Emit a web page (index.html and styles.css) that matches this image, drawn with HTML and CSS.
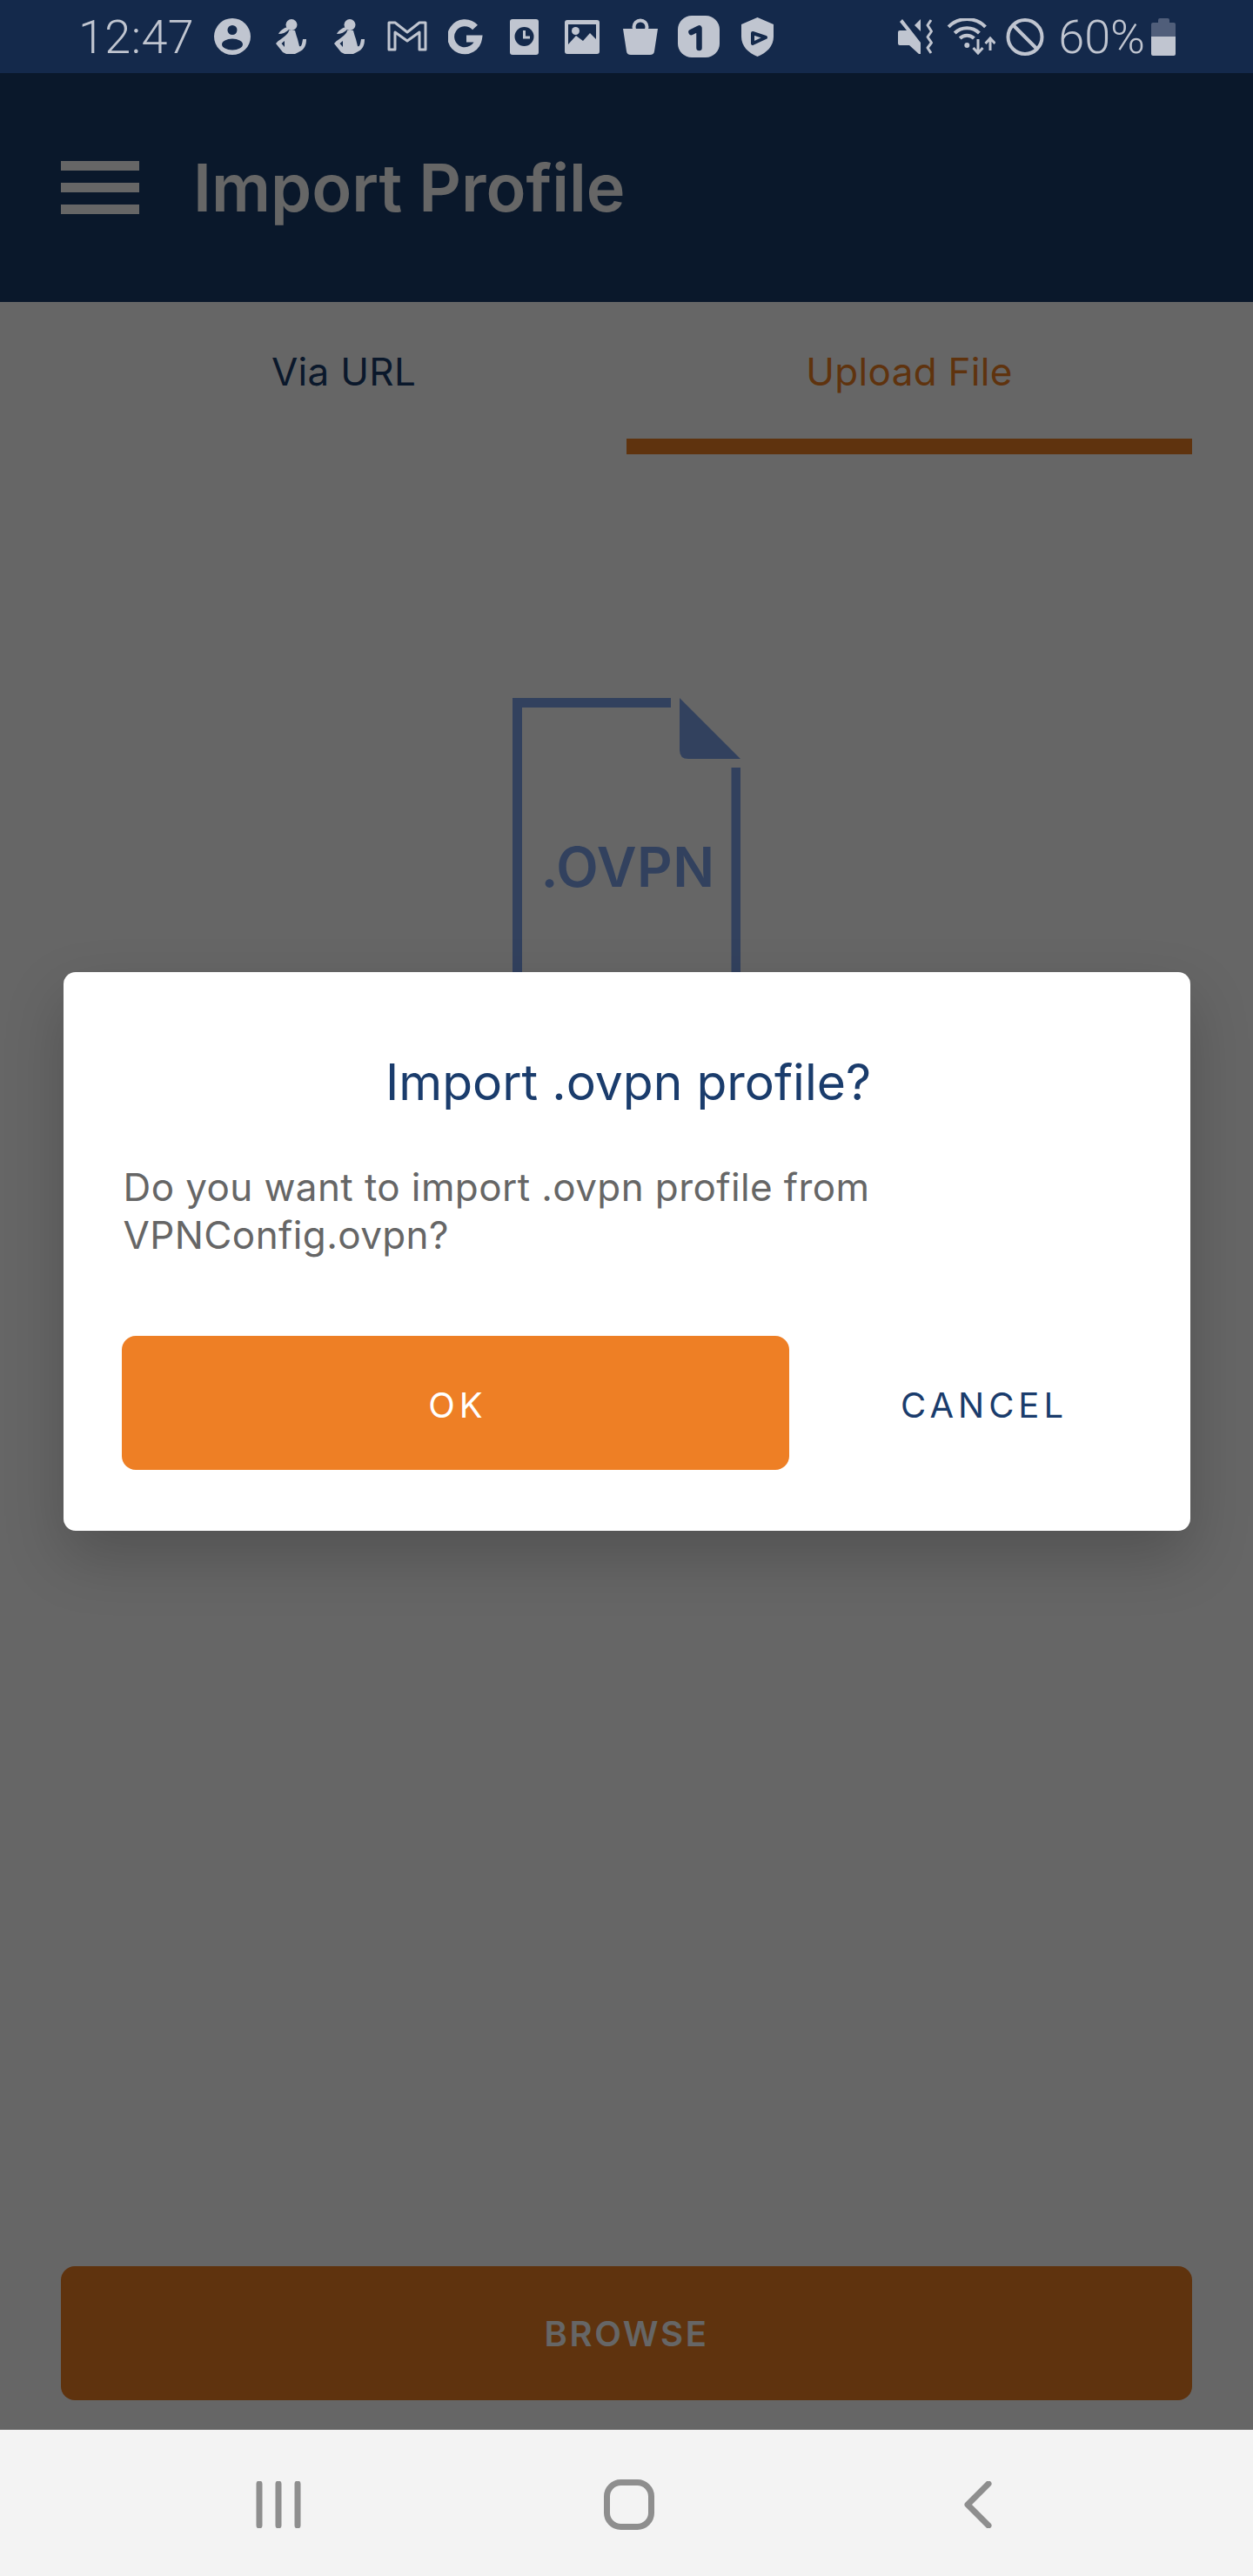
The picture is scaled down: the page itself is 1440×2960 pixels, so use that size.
FILE: index.html
```html
<!DOCTYPE html>
<html lang="en">

<head>
  <meta charset="UTF-8">
  <meta name="viewport" content="width=device-width, initial-scale=1.0">
  <title>Import Profile</title>
  <link rel="stylesheet" href="styles.css">
</head>

<body>
  <div class="screen">
    <!-- Android status bar -->
    <div class="status-bar">
      <span class="status-time">12:47</span>
      <div class="notif-icons">
        <svg width="42" height="42" viewBox="0 0 42 42">
          <circle class="ic" cx="21" cy="21" r="21" />
          <circle class="ic-bg" cx="21" cy="13.5" r="5.5" />
          <ellipse class="ic-bg" cx="21" cy="30" rx="12" ry="6.5" />
        </svg>
        <svg width="35" height="40" viewBox="0 0 35 40">
          <circle class="ic" cx="18" cy="6.5" r="6.5" />
          <path class="ic" d="M14 9 C9 10 5 13 3 17 C8 17 12 15 15 12 Z" />
          <path class="ic" d="M15 13 H22 C23 17 24 20 25 23 L27 31 C29 32 30 30 31 23 H35 C35 30 33 35 26 38 L22 40 H12 L8 38 L0 28 C3 24 8 22 11 19 C13 17 15 15 15 13 Z" />
          <path class="ic-bg" d="M10 25 L6.5 28 L10 32 Z" />
        </svg>
        <svg width="35" height="40" viewBox="0 0 35 40">
          <circle class="ic" cx="18" cy="6.5" r="6.5" />
          <path class="ic" d="M14 9 C9 10 5 13 3 17 C8 17 12 15 15 12 Z" />
          <path class="ic" d="M15 13 H22 C23 17 24 20 25 23 L27 31 C29 32 30 30 31 23 H35 C35 30 33 35 26 38 L22 40 H12 L8 38 L0 28 C3 24 8 22 11 19 C13 17 15 15 15 13 Z" />
          <path class="ic-bg" d="M10 25 L6.5 28 L10 32 Z" />
        </svg>
        <svg width="46" height="36" viewBox="0 0 46 36">
          <path class="ic-line" stroke-width="3" stroke-linejoin="round" d="M2 2 H9 L23 13 L37 2 H44 V33 H37 V13 L23 23 L9 13 V33 H2 Z" />
        </svg>
        <svg width="40" height="41" viewBox="0 0 40 41">
          <path class="ic-line" stroke-width="8" d="M31 9.5 A16 16 0 1 0 35 22.5 H21" />
        </svg>
        <svg width="33" height="41" viewBox="0 0 33 41">
          <rect class="ic" width="33" height="41" rx="3" />
          <circle class="ic-bg" cx="16.5" cy="20" r="11" />
          <path class="ic-line" stroke-width="3" d="M16.5 13 V21 H23" />
        </svg>
        <svg width="40" height="39" viewBox="0 0 40 39">
          <rect class="ic" width="40" height="39" rx="3" />
          <path class="ic-bg" d="M4 5 H36 V22 L29 15 L21 24 L13 18 L4 28 Z" />
          <circle class="ic" cx="12.5" cy="12.5" r="4.5" />
        </svg>
        <svg width="40" height="42" viewBox="0 0 40 42">
          <circle class="ic-line" stroke-width="4" cx="20" cy="10" r="7.5" />
          <path class="ic" d="M0 12 H40 L36 38 Q35.5 42 31 42 H9 Q4.5 42 4 38 Z" />
        </svg>
        <svg width="48" height="48" viewBox="0 0 48 48">
          <rect class="ic" width="48" height="48" rx="16" />
          <path class="ic-line ic-line-dark" stroke-width="6.5" stroke-linecap="round" stroke-linejoin="round" d="M15.5 19 L24.5 14.5 V37" />
        </svg>
        <svg width="37" height="45" viewBox="0 0 37 45">
          <path class="ic" d="M18.5 0 L37 8 V22 C37 33 29 41 18.5 45 C8 41 0 33 0 22 V8 Z" />
          <path class="ic-play" stroke-width="4" stroke-linejoin="round" d="M13 18 L28 23 L13 30 Z" />
        </svg>
      </div>
      <div class="system-icons">
        <svg class="icon-mute" width="41" height="40" viewBox="0 0 41 40">
          <path class="ic" d="M2 3 L5 0 L26 27 V40 H24 L13 30 H2 Q0 30 0 28 V15 Q0 13 2 13 H10 Z" />
          <path class="ic" d="M26 0 V14 L19 7 Z" />
          <path class="ic-line" stroke-width="3" stroke-linejoin="round" d="M38 1 L34 7 L38.5 14 L34 20.5 L38.5 27 L34 33 L38 39" />
        </svg>
        <svg width="56" height="42" viewBox="0 0 56 42">
          <path class="ic-line" stroke-width="4" d="M2.1 9.8 A30 30 0 0 1 44.5 9.8" />
          <path class="ic-line" stroke-width="4" d="M9.2 17 A20 20 0 0 1 37.4 17" />
          <path class="ic-line" stroke-width="4" d="M15.2 23 A11.5 11.5 0 0 1 31.4 23" />
          <circle class="ic" cx="23.3" cy="31" r="3" />
          <path class="ic-line" stroke-width="3" d="M36 24 V40 M30.5 34 L36 40 L41.5 34" />
          <path class="ic-line" stroke-width="3" d="M50 37 V24 M44.5 29 L50 23 L55.5 29" />
        </svg>
        <svg width="44" height="43" viewBox="0 0 44 43">
          <circle class="ic-line" stroke-width="4" cx="22" cy="21.5" r="19.5" />
          <path class="ic-line" stroke-width="4" d="M8 7.5 L36 35.5" />
        </svg>
        <span class="status-battery-text">60%</span>
        <svg width="28" height="43" viewBox="0 0 28 43">
          <path class="ic-dim" d="M8 2 Q8 0 10 0 H19 Q21 0 21 2 V5 H26 Q28 5 28 7 V21 H0 V7 Q0 5 2 5 H8 Z" />
          <path class="ic" d="M0 21 H28 V41 Q28 43 26 43 H2 Q0 43 0 41 Z" />
        </svg>
      </div>
    </div>

    <div class="app">
      <header class="app-header">
        <div class="menu-icon">
          <span></span>
          <span></span>
          <span></span>
        </div>
        <h1>Import Profile</h1>
      </header>

      <nav class="tabs">
        <div class="tab">Via URL</div>
        <div class="tab tab-active">Upload File</div>
      </nav>

      <main class="upload-area">
        <svg class="file-icon" width="262" height="330" viewBox="0 0 262 330">
          <path class="file-line" d="M182 5.5 H5.5 V330 M257 80 V330" />
          <path class="file-fold" d="M192 0 L262 70 H202 Q192 70 192 60 Z" />
          <text class="file-ext" x="132.5" y="217" text-anchor="middle">.OVPN</text>
        </svg>
      </main>

      <div class="browse-wrap">
        <button class="browse-button">BROWSE</button>
      </div>

      <!-- Dimmed overlay with the dialog -->
      <div class="scrim">
        <div class="dialog">
          <h2>Import .ovpn profile?</h2>
          <p>Do you want to import .ovpn profile from<br>VPNConfig.ovpn?</p>
          <div class="dialog-actions">
            <button class="ok-button">OK</button>
            <button class="cancel-button">CANCEL</button>
          </div>
        </div>
      </div>
    </div>

    <!-- Android navigation bar -->
    <div class="nav-bar">
      <svg class="nav-recents" width="52" height="54" viewBox="0 0 52 54">
        <path d="M4 3 V51 M26 3 V51 M48 3 V51" />
      </svg>
      <svg class="nav-home" width="58" height="58" viewBox="0 0 58 58">
        <rect x="3.5" y="3.5" width="51" height="51" rx="16" />
      </svg>
      <svg class="nav-back" width="32" height="54" viewBox="0 0 32 54">
        <path d="M28 3 L4 27 L28 51" />
      </svg>
    </div>
  </div>
</body>

</html>
```

FILE: styles.css
```css
:root {
  --navy: #1a3c6c;
  --orange: #ee7f25;
  --file-blue: #7da4ec;
  --status-bg: #14294b;
  --status-fg: #c0c5d0;
  --text-grey: #666666;
}

* {
  margin: 0;
  padding: 0;
  box-sizing: border-box;
}

body {
  font-family: 'Inter', sans-serif;
  background: #fff;
}

.screen {
  width: 1440px;
  height: 2960px;
  display: flex;
  flex-direction: column;
  overflow: hidden;
}

/* Status bar */
.status-bar {
  height: 84px;
  flex-shrink: 0;
  display: flex;
  align-items: center;
  padding: 0 89px 0 90px;
  background: var(--status-bg);
  color: var(--status-fg);
  font-family: 'Roboto', sans-serif;
  font-weight: 300;
  font-size: 54px;
}

.status-time {
  width: 143.5px;
  letter-spacing: 0.4px;
}

.notif-icons {
  display: grid;
  grid-template-columns: repeat(10, 67px);
  align-items: center;
  justify-items: center;
}

.system-icons {
  margin-left: auto;
  display: flex;
  align-items: center;
  gap: 12px;
}

.icon-mute {
  margin-right: 3px;
}

.status-battery-text {
  margin: 0 -5px 0 4px;
}

.ic {
  fill: var(--status-fg);
}

.ic-bg {
  fill: var(--status-bg);
}

.ic-dim {
  fill: #505e7a;
}

.ic-play {
  fill: var(--status-fg);
  stroke: var(--status-bg);
}

.ic-line {
  fill: none;
  stroke: var(--status-fg);
}

.ic-line-dark {
  stroke: var(--status-bg);
}

/* App content */
.app {
  flex: 1;
  position: relative;
  display: flex;
  flex-direction: column;
}

.app-header {
  height: 263px;
  flex-shrink: 0;
  display: flex;
  align-items: center;
  padding-left: 70px;
  background: var(--navy);
  color: #fff;
}

.app-header h1 {
  font-size: 75.6px;
  font-weight: 600;
  margin-left: 62px;
}

.menu-icon {
  width: 90px;
  display: flex;
  flex-direction: column;
  gap: 14px;
}

.menu-icon span {
  height: 11px;
  background: #fff;
}

.tabs {
  display: flex;
  padding: 0 70px;
}

.tab {
  flex: 1;
  height: 175px;
  padding-top: 50px;
  text-align: center;
  font-size: 44px;
  line-height: 60px;
  letter-spacing: 0.3px;
  color: var(--navy);
}

.tab-active {
  color: var(--orange);
  border-bottom: 18px solid var(--orange);
}

.upload-area {
  flex: 1;
  display: flex;
  justify-content: center;
  align-items: flex-start;
  padding-top: 280px;
}

.file-line {
  fill: none;
  stroke: var(--file-blue);
  stroke-width: 11;
}

.file-fold {
  fill: var(--file-blue);
}

.file-ext {
  fill: var(--file-blue);
  font-family: 'Inter', sans-serif;
  font-size: 63px;
  font-weight: 600;
  letter-spacing: 0.5px;
}

.browse-wrap {
  padding: 0 70px 34px;
}

.browse-button {
  width: 100%;
  height: 154px;
  border: none;
  border-radius: 16px;
  background: var(--orange);
  color: #fff;
  font-family: 'Inter', sans-serif;
  font-size: 40px;
  font-weight: 600;
  letter-spacing: 2.6px;
}

/* Dialog */
.scrim {
  position: absolute;
  top: 0;
  left: 0;
  right: 0;
  bottom: 0;
  display: flex;
  align-items: center;
  padding-left: 73px;
  background: rgba(0, 0, 0, 0.6);
}

.dialog {
  width: 1295px;
  height: 642px;
  padding-top: 90px;
  background: #fff;
  border-radius: 14px;
  box-shadow: 0 30px 70px rgba(0, 0, 0, 0.2);
}

.dialog h2 {
  font-size: 57px;
  font-weight: 400;
  line-height: 74px;
  text-align: center;
  color: var(--navy);
  padding-left: 3px;
}

.dialog p {
  margin-top: 56px;
  padding-left: 68.5px;
  font-size: 44px;
  line-height: 55px;
  letter-spacing: 0.4px;
  color: var(--text-grey);
}

.dialog-actions {
  display: flex;
  margin-top: 88px;
  padding-left: 67px;
}

.ok-button {
  width: 767px;
  height: 154px;
  padding: 4px 0 0 5px;
  border: none;
  border-radius: 16px;
  background: var(--orange);
  color: #fff;
  font-family: 'Inter', sans-serif;
  font-size: 40px;
  letter-spacing: 5px;
}

.cancel-button {
  width: 442px;
  height: 154px;
  padding: 4px 0 0 6px;
  border: none;
  background: none;
  color: var(--navy);
  font-family: 'Inter', sans-serif;
  font-size: 40px;
  letter-spacing: 5px;
}

/* Navigation bar */
.nav-bar {
  height: 168px;
  flex-shrink: 0;
  display: grid;
  grid-template-columns: 642px 111px 1fr;
  align-items: center;
  background: #f3f3f3;
  padding-top: 4px;
}

.nav-bar svg {
  fill: none;
  stroke: #8e8e8e;
  stroke-width: 7;
  stroke-linecap: round;
  stroke-linejoin: round;
}

.nav-recents {
  margin-left: 294px;
}

.nav-home {
  margin-left: 52px;
}

.nav-back {
  margin-left: 355px;
}
```
